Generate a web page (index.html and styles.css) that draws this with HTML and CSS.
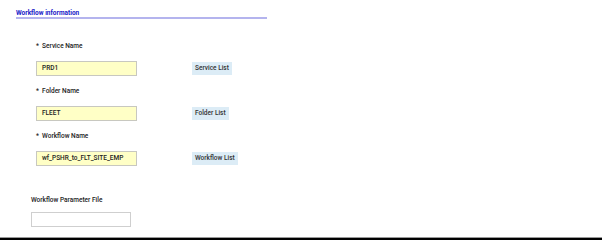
FILE: index.html
```html
<!DOCTYPE html>
<html>
<head>
<meta charset="utf-8">
<link rel="stylesheet" href="styles.css">
</head>
<body>
<div class="page">
  <div class="title">Workflow information</div>
  <div class="fields">
    <div class="field">
      <div class="label">*&nbsp; Service Name</div>
      <div class="row">
        <div class="input req">PRD1</div>
        <div class="btn">Service List</div>
      </div>
    </div>
    <div class="field">
      <div class="label">*&nbsp; Folder Name</div>
      <div class="row">
        <div class="input req">FLEET</div>
        <div class="btn">Folder List</div>
      </div>
    </div>
    <div class="field">
      <div class="label">*&nbsp; Workflow Name</div>
      <div class="row">
        <div class="input req">wf_PSHR_to_FLT_SITE_EMP</div>
        <div class="btn">Workflow List</div>
      </div>
    </div>
  </div>
  <div class="param">
    <div class="label">Workflow Parameter File</div>
    <div class="input plain"></div>
  </div>
</div>
<div class="bottom"></div>
</body>
</html>
```
FILE: styles.css
```css
html, body {
  margin: 0;
  padding: 0;
  background: #fff;
  width: 602px;
  height: 240px;
  overflow: hidden;
  font-family: Roboto, "Liberation Sans", sans-serif;
  color: #222;
}
.page {
  height: 237px;
  padding-left: 16px;
  box-sizing: border-box;
  padding-top: 10px;
}
.title {
  width: 251px;
  font-size: 6.5px;
  font-weight: bold;
  color: #1a1ac8;
  line-height: 7px;
  border-bottom: 2px solid #b4b4ee;
}
.fields {
  padding-left: 20px;
  padding-top: 23px;
  display: flex;
  flex-direction: column;
  gap: 11px;
}
.field {
  display: flex;
  flex-direction: column;
  gap: 11px;
}
.label {
  font-size: 6.5px;
  line-height: 8px;
  font-weight: 500;
  color: #222;
}
.row {
  display: flex;
  align-items: center;
  gap: 55px;
}
.input {
  width: 101px;
  height: 15px;
  box-sizing: border-box;
  border: 1px solid #c8c8c0;
  font-size: 6.5px;
  line-height: 13px;
  padding-left: 5px;
  font-weight: 500;
}
.input.req {
  background: #ffffc6;
}
.input.plain {
  background: #fff;
  width: 100px;
  border-color: #cfcfcf;
}
.btn {
  background: #dcecf6;
  font-size: 6.5px;
  line-height: 13px;
  padding: 0 3px;
  font-weight: 500;
  color: #333;
}
.param {
  padding-left: 15px;
  padding-top: 30px;
  display: flex;
  flex-direction: column;
  gap: 8px;
}
.bottom {
  height: 3px;
  box-sizing: border-box;
  border-top: 1px solid #999;
  background: #000;
}
```
